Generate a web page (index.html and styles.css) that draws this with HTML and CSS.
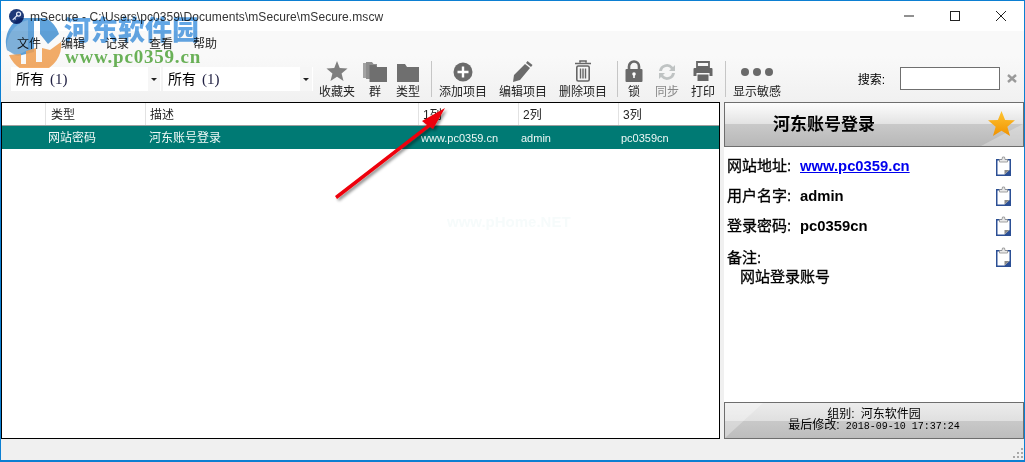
FILE: index.html
```html
<!DOCTYPE html>
<html lang="zh-CN">
<head>
    <meta charset="UTF-8">
    <title>mSecure</title>
    <link rel="stylesheet" href="styles.css">
</head>
<body>
<svg class="defs" width="0" height="0">
    <symbol id="clipboard" viewBox="0 0 15 20">
        <path d="M0 3h15v17H0z" fill="#2b4f95"/>
        <path d="M1.500 4.500h12v9.500l-5 4.500h-7z" fill="#fff"/>
        <path d="M8.500 18.500V14h5z" fill="#8a8a8a"/>
        <path d="M3.500 6V3.500h2.500L6.500 1h2l.5 2.500h2.500V6z" fill="#e8e8e8" stroke="#8e8e8e" stroke-width=".8"/>
    </symbol>
</svg>

<div class="window">
    <div class="titlebar">
        <svg class="app-icon" width="15" height="15" viewBox="0 0 18 18">
            <circle cx="9" cy="9" r="9" fill="#1f3a78"/>
            <circle cx="11.5" cy="6" r="2.400" fill="none" stroke="#dfe6f5" stroke-width="1.500"/>
            <path d="M10 7.500 4.500 13M6.500 11l1.500 1.500" stroke="#dfe6f5" stroke-width="1.500" fill="none"/>
        </svg>
        <span class="title-text">mSecure - C:\Users\pc0359\Documents\mSecure\mSecure.mscw</span>
        <div class="win-buttons">
            <svg width="46" height="30" viewBox="0 0 46 30"><path d="M18 15h10" stroke="#222" fill="none"/></svg>
            <svg width="46" height="30" viewBox="0 0 46 30"><rect x="18.500" y="10.500" width="9" height="9" stroke="#222" fill="none"/></svg>
            <svg width="46" height="30" viewBox="0 0 46 30"><path d="M18 10l10 10M28 10 18 20" stroke="#222" fill="none"/></svg>
        </div>
    </div>

    <div class="menubar">
        <span>文件</span><span>编辑</span><span>记录</span><span>查看</span><span>帮助</span>
    </div>

    <div class="toolbar">
        <div class="combo"><span class="combo-text">所有 <em>(1)</em></span><span class="combo-arrow"></span></div>
        <div class="combo"><span class="combo-text">所有 <em>(1)</em></span><span class="combo-arrow"></span></div>

        <div class="tool tool-fav">
            <svg width="22" height="22" viewBox="0 0 24 24"><path d="M12 1l3 7.800 8.500.6-6.500 5.300 2.100 8.300L12 18.400 4.900 23l2.100-8.300L.5 9.400 9 8.800z" fill="#7f7f7f"/></svg>
            <span>收藏夹</span>
        </div>
        <div class="tool tool-group">
            <svg width="24" height="20" viewBox="0 0 24 20"><path d="M0 1h5l1 1.500V16H0z" fill="#a2a2a2"/><path d="M3 0h6l1.500 2H14v15H3z" fill="#8e8e8e"/><path d="M6.500 3h6l1.500 2h10v15H6.500z" fill="#6f6f6f"/></svg>
            <span>群</span>
        </div>
        <div class="tool tool-type">
            <svg width="22" height="18" viewBox="0 0 22 18"><path d="M0 0h8l2 3h12v15H0z" fill="#6f6f6f"/></svg>
            <span>类型</span>
        </div>
        <div class="tool-sep sep-a"></div>
        <div class="tool tool-add">
            <svg width="20" height="20" viewBox="0 0 20 20"><circle cx="10" cy="10" r="9.500" fill="#6b6b6b"/><path d="M10 4.500v11M4.500 10h11" stroke="#fff" stroke-width="2.400"/></svg>
            <span>添加项目</span>
        </div>
        <div class="tool tool-edit">
            <svg width="22" height="22" viewBox="0 0 22 22"><path d="M15.500 1l5 4-1.500 2-5-4zM13 4l5 4-10 12-7 2 1-7z" fill="#6b6b6b"/></svg>
            <span>编辑项目</span>
        </div>
        <div class="tool tool-del">
            <svg width="18" height="22" viewBox="0 0 18 22"><path d="M6 2.500V1h6v1.500M1 3.500h16" stroke="#666" stroke-width="1.600" fill="none"/><rect x="2.800" y="6" width="12.400" height="15" rx="1.500" fill="none" stroke="#666" stroke-width="1.600"/><path d="M6.500 8.500v10M9 8.500v10M11.500 8.500v10" stroke="#666" stroke-width="1.400"/></svg>
            <span>删除项目</span>
        </div>
        <div class="tool-sep sep-b"></div>
        <div class="tool tool-lock">
            <svg width="18" height="22" viewBox="0 0 18 22"><path d="M4 10V6.500a5 5 0 0 1 10 0V10" fill="none" stroke="#6a6a6a" stroke-width="2.600"/><rect x="0.500" y="9" width="17" height="13" rx="1" fill="#6a6a6a"/><circle cx="9" cy="14" r="1.800" fill="#fff"/><path d="M8.200 14h1.600v4H8.200z" fill="#fff"/></svg>
            <span>锁</span>
        </div>
        <div class="tool tool-sync dim">
            <svg width="20" height="20" viewBox="0 0 20 20"><path d="M2 9a8 8 0 0 1 14-4l2-2v6h-6l2-2a5 5 0 0 0-9 2z" fill="#bfc3c3"/><path d="M18 11a8 8 0 0 1-14 4l-2 2v-6h6l-2 2a5 5 0 0 0 9-2z" fill="#bfc3c3"/></svg>
            <span>同步</span>
        </div>
        <div class="tool tool-print">
            <svg width="20" height="21" viewBox="0 0 20 21"><path d="M4 1h12v5H4z" fill="none" stroke="#666" stroke-width="1.800"/><path d="M1.500 7h17a1 1 0 0 1 1 1v7h-3v-3h-13v3h-3V8a1 1 0 0 1 1-1z" fill="#666"/><path d="M4.500 13.500h11V20h-11z" fill="#666"/></svg>
            <span>打印</span>
        </div>
        <div class="tool-sep sep-c"></div>
        <div class="tool tool-show">
            <svg class="dots" width="34" height="10" viewBox="0 0 34 10"><circle cx="5" cy="5" r="4" fill="#6a6a6a"/><circle cx="17" cy="5" r="4" fill="#6a6a6a"/><circle cx="29" cy="5" r="4" fill="#6a6a6a"/></svg>
            <span>显示敏感</span>
        </div>
        <div class="search">
            <label>搜索:</label>
            <div class="search-box"></div>
            <svg width="10" height="9" viewBox="0 0 10 9"><path d="M1 1l8 7M9 1 1 8" stroke="#9a9a9a" stroke-width="2.400"/></svg>
        </div>
    </div>

    <div class="main">
        <div class="list">
            <div class="row list-head">
                <div class="cell c0"></div>
                <div class="cell c1">类型</div>
                <div class="cell c2">描述</div>
                <div class="cell c3">1列</div>
                <div class="cell c3">2列</div>
                <div class="cell c3 last">3列</div>
            </div>
            <div class="row list-item">
                <div class="cell c0"></div>
                <div class="cell c1">网站密码</div>
                <div class="cell c2">河东账号登录</div>
                <div class="cell c3">www.pc0359.cn</div>
                <div class="cell c3">admin</div>
                <div class="cell c3 last">pc0359cn</div>
            </div>
        </div>

        <div class="detail">
            <div class="detail-head">
                <span>河东账号登录</span>
                <svg class="head-star" width="29" height="27" viewBox="0 0 32 30">
                    <defs><linearGradient id="gold" x1="0" y1="0" x2="0" y2="1"><stop offset="0" stop-color="#ffc533"/><stop offset="1" stop-color="#f09200"/></linearGradient></defs>
                    <path d="M16 1l4 10 11 .5-8.500 7 3 10.500L16 23l-9.500 6 3-10.500L1 11.500 12 11z" fill="url(#gold)"/>
                </svg>
            </div>
            <div class="fields">
                <div class="field"><span class="f-label">网站地址:</span><a class="f-link">www.pc0359.cn</a><svg class="clip" width="15" height="20"><use href="#clipboard"/></svg></div>
                <div class="field"><span class="f-label">用户名字:</span><span class="f-value">admin</span><svg class="clip" width="15" height="20"><use href="#clipboard"/></svg></div>
                <div class="field"><span class="f-label">登录密码:</span><span class="f-value">pc0359cn</span><svg class="clip" width="15" height="20"><use href="#clipboard"/></svg></div>
                <div class="field field-note"><span class="f-label">备注:</span><svg class="clip" width="15" height="20"><use href="#clipboard"/></svg></div>
                <div class="note">网站登录账号</div>
            </div>
            <div class="detail-foot">
                <div class="foot-group">组别: 河东软件园</div>
                <div>最后修改: <span class="foot-date">2018-09-10 17:37:24</span></div>
            </div>
        </div>
    </div>

    <div class="statusbar">
        <svg width="10" height="10" viewBox="0 0 10 10" fill="#a8a8a8"><rect x="8" y="0" width="2" height="2"/><rect x="4" y="4" width="2" height="2"/><rect x="8" y="4" width="2" height="2"/><rect x="0" y="8" width="2" height="2"/><rect x="4" y="8" width="2" height="2"/><rect x="8" y="8" width="2" height="2"/></svg>
    </div>
</div>

<!-- watermark and annotation pasted over the screenshot -->
<div class="watermark">
    <svg class="wm-logo" width="60" height="50" viewBox="0 0 60 50">
        <path d="M3 32A27 27 0 0 1 55 16L44 26 36 16V3H30V34L14 38z" fill="#3d8fd4" opacity=".82"/>
        <path d="M3 32A27 27 0 0 1 24 2V32L12 38z" fill="#8fbbe0" opacity=".7"/>
        <path d="M5 37A27 27 0 0 0 57 24L46 32 38 30V44H32V30L22 33V46H17V36z" fill="#f6a455" opacity=".88"/>
    </svg>
    <div class="wm-cn">河东软件园</div>
    <div class="wm-url">www.pc0359.cn</div>
</div>

<div class="ghost-mark">www.pHome.NET</div>

<svg class="arrow" width="120" height="100" viewBox="0 0 120 100">
    <defs><filter id="soft" x="-20%" y="-20%" width="150%" height="150%"><feDropShadow dx="2" dy="2" stdDeviation="1.500" flood-color="#000" flood-opacity=".45"/></filter></defs>
    <path d="M2 92 94 21 89 17 112 4 100 25 97 23 4 95z" fill="#ee0008" filter="url(#soft)"/>
</svg>
</body>
</html>
```

FILE: styles.css
```css
* {
    box-sizing: border-box;
}
body {
    margin: 0;
    font-family: "Liberation Sans", "Noto Sans CJK SC", sans-serif;
    font-size: 12px;
    color: #000;
    background: #fff;
    overflow: hidden;
}
em {
    font-style: normal;
}
.defs {
    position: absolute;
}
.window {
    width: 1025px;
    height: 462px;
    border: 1px solid #0c7fd2;
    border-bottom-width: 2px;
    display: flex;
    flex-direction: column;
    background: #f0f0f0;
}

/* title bar */
.titlebar {
    height: 30px;
    flex: none;
    background: #fff;
    display: flex;
    align-items: center;
    padding-left: 8px;
}
.app-icon {
    flex: none;
    margin-right: 6px;
}
.title-text {
    font-size: 12px;
    color: #333;
    padding-top: 2px;
    letter-spacing: .08px;
}
.win-buttons {
    margin-left: auto;
    display: flex;
}

/* menu */
.menubar {
    height: 25px;
    flex: none;
    background: #f9f9f9;
    display: flex;
    align-items: center;
    gap: 20px;
    padding: 0 0 2px 16px;
    color: #222;
}

/* toolbar */
.toolbar {
    height: 44px;
    flex: none;
    display: flex;
    align-items: flex-start;
    background: linear-gradient(#f9f9f9, #f1f1f1);
    padding-left: 10px;
}
.combo {
    width: 150px;
    height: 24px;
    margin: 11px 2px 0 0;
    background: #fff;
    display: flex;
    align-items: center;
    font-size: 14px;
    padding-left: 5px;
    flex: none;
}
.combo em {
    font-family: "Liberation Serif", serif;
    font-size: 15px;
    color: #224;
    margin-left: 2px;
}
.combo-text {
    flex: 1;
    padding-bottom: 3px;
}
.combo-arrow {
    width: 12px;
    height: 24px;
    margin-right: 1px;
    background: #f6f6f6;
    position: relative;
}
.combo-arrow::after {
    content: "";
    position: absolute;
    left: 3px;
    top: 11px;
    border: 3px solid transparent;
    border-top: 3px solid #222;
    border-bottom: 0;
}
.tool {
    height: 44px;
    display: flex;
    flex-direction: column;
    align-items: center;
    justify-content: flex-end;
    color: #222;
    font-size: 12px;
    line-height: 16px;
    white-space: nowrap;
    flex: none;
}
.tool svg {
    margin-bottom: 2px;
}
.tool svg.dots {
    margin-bottom: 7px;
}
.tool.dim {
    color: #888;
}
.tool-fav { width: 38px; margin-left: 3px; }
.tool-group { width: 32px; margin-left: 3px; }
.tool-type { width: 30px; margin-left: 2px; }
.tool-add { width: 52px; margin-left: 5px; }
.tool-edit { width: 52px; margin-left: 8px; }
.tool-del { width: 52px; margin-left: 8px; }
.tool-lock { width: 18px; margin-left: 7px; }
.tool-sync { width: 28px; margin-left: 10px; }
.tool-print { width: 26px; margin-left: 9px; }
.tool-show { width: 52px; margin-left: 5px; }
.tool-sep {
    width: 1px;
    height: 36px;
    margin-top: 5px;
    background: #c6c6c6;
    flex: none;
}
.sep-a { margin-left: 8px; }
.sep-b { margin-left: 8px; }
.sep-c { margin-left: 9px; }
.search {
    margin-left: auto;
    margin-top: 11px;
    display: flex;
    align-items: center;
    padding-right: 7px;
}
.search label {
    margin-right: 15px;
}
.search-box {
    width: 100px;
    height: 23px;
    border: 1px solid #6f6f6f;
    background: #fff;
    margin-right: 7px;
}

/* main area */
.main {
    flex: 1;
    display: flex;
    min-height: 0;
    padding-top: 2px;
}
.list {
    width: 719px;
    flex: none;
    background: #fff;
    border: 1px solid #000;
    margin-right: 4px;
}
.row {
    display: flex;
}
.cell {
    flex: none;
    padding-left: 4px;
    white-space: nowrap;
    overflow: hidden;
}
.c0 { width: 44px; }
.c1 { width: 100px; }
.c2 { width: 273px; }
.c3 { width: 100px; }
.list-head {
    height: 23px;
    line-height: 24px;
    color: #222;
    border-bottom: 1px solid #9e9e9e;
}
.list-head .cell {
    border-right: 1px solid #e2e2e2;
}
.list-head .c1 {
    padding-left: 5px;
}
.list-head .last {
    border-right: 0;
}
.list-item {
    height: 23px;
    line-height: 25px;
    background: #007a74;
    color: #eef8f6;
}
.list-item .c1 {
    padding-left: 2px;
}
.list-item .c2 {
    padding-left: 3px;
}
.list-item .c3 {
    font-size: 11px;
    padding-left: 2px;
}

/* detail pane */
.detail {
    flex: 1;
    min-width: 0;
    background: #fff;
    display: flex;
    flex-direction: column;
}
.detail-head {
    height: 45px;
    flex: none;
    border: 1px solid #6e6e6e;
    background: linear-gradient(#fdfdfd, #e2e2e2 50%, #c9c9c9 50%, #b8b8b8);
    display: flex;
    align-items: center;
    padding: 0 0 4px 48px;
    font-size: 17px;
    font-weight: bold;
    position: relative;
}
.detail-head::after {
    content: "";
    position: absolute;
    right: 0;
    bottom: 0;
    width: 42px;
    height: 22px;
    background: rgba(255, 255, 255, .28);
    clip-path: polygon(100% 0, 100% 100%, 0 100%);
}
.head-star {
    position: absolute;
    right: 7px;
    top: 7px;
    z-index: 1;
}
.fields {
    flex: 1;
    padding: 4px 0 0 3px;
    font-size: 15px;
    font-weight: bold;
}
.field {
    height: 30px;
    display: flex;
    align-items: center;
}
.f-label {
    width: 73px;
    padding-bottom: 3px;
    font-weight: normal;
    -webkit-text-stroke: .3px #000;
}
.f-link {
    color: #0000ee;
    text-decoration: underline;
    font-size: 14.800px;
}
.f-value {
    font-size: 14.800px;
}
.clip {
    flex: none;
    margin-left: auto;
    margin-right: 13px;
}
.field-note .f-label {
    padding-bottom: 0;
}
.field-note .clip {
    margin-top: 2px;
}
.note {
    padding-left: 13px;
    margin-top: -4px;
    line-height: 20px;
    font-weight: normal;
    -webkit-text-stroke: .3px #000;
}
.detail-foot {
    height: 37px;
    flex: none;
    border: 1px solid #6e6e6e;
    background: linear-gradient(#ececec, #e0e0e0 50%, #c9c9c9 50%, #bdbdbd);
    text-align: center;
    font-size: 12px;
    line-height: 11px;
    padding: 6px 0 0 0;
    position: relative;
}
.detail-foot::before {
    content: "";
    position: absolute;
    left: 0;
    top: 0;
    bottom: 0;
    width: 38px;
    background: rgba(255, 255, 255, .3);
    clip-path: polygon(0 0, 100% 0, 0 100%);
}
.foot-group {
    word-spacing: 3px;
}
.foot-date {
    font-family: "Liberation Mono", monospace;
    font-size: 10px;
    margin-left: 3px;
}

/* status bar */
.statusbar {
    height: 21px;
    flex: none;
    display: flex;
    justify-content: flex-end;
    align-items: flex-end;
    padding: 0 1px 2px 0;
}

/* overlays */
.watermark {
    position: absolute;
    left: 4px;
    top: 18px;
    width: 220px;
    height: 54px;
    pointer-events: none;
    mix-blend-mode: multiply;
}
.wm-logo {
    position: absolute;
    left: 0;
    top: 0;
}
.wm-cn {
    position: absolute;
    left: 60px;
    top: -6px;
    font-family: "Noto Sans CJK SC", sans-serif;
    font-size: 27px;
    line-height: 34px;
    font-weight: 900;
    color: rgba(70, 150, 225, .85);
    white-space: nowrap;
}
.wm-url {
    position: absolute;
    left: 61px;
    top: 29px;
    font-family: "Liberation Serif", serif;
    font-size: 19px;
    line-height: 20px;
    font-weight: bold;
    letter-spacing: .8px;
    color: rgba(95, 175, 75, .92);
    white-space: nowrap;
}
.ghost-mark {
    position: absolute;
    left: 447px;
    top: 213px;
    font-size: 15px;
    font-weight: bold;
    color: #f6fbfb;
    white-space: nowrap;
}
.arrow {
    position: absolute;
    left: 333px;
    top: 104px;
}
```
